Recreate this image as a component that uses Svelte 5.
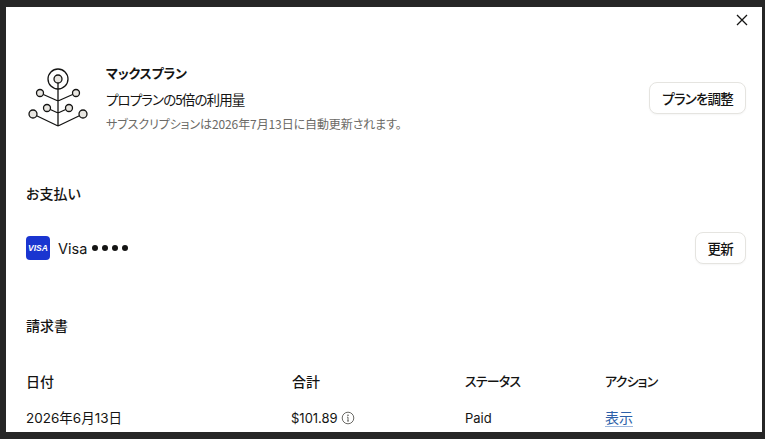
<script>
  const columns = [
    { label: '日付', kana: false },
    { label: '合計', kana: false },
    { label: 'ステータス', kana: true },
    { label: 'アクション', kana: true }
  ];
</script>

<div class="frame">
  <div class="panel">
    <div class="close-row">
      <button class="close" aria-label="閉じる">
        <svg width="12" height="12" viewBox="0 0 12 12" fill="none" stroke="#141413" stroke-width="1.3">
          <path d="M1 1l10 10M11 1L1 11" />
        </svg>
      </button>
    </div>

    <section class="plan">
      <svg class="plan-icon" width="64" height="62" viewBox="0 0 64 62" fill="none" stroke="#141413" stroke-width="1.3">
        <circle cx="32" cy="12" r="10" />
        <path d="M32 16v43M32 34L14 26M32 34l18-8M32 59L7 47M32 59l25-12M32 46l-11-5M32 46l11-5" />
        <g fill="#e8e6e1">
          <circle cx="32" cy="12" r="4" />
          <circle cx="14" cy="26" r="3.5" />
          <circle cx="50" cy="26" r="3.5" />
          <circle cx="21" cy="41" r="3.5" />
          <circle cx="43" cy="41" r="3.5" />
          <circle cx="7" cy="47" r="4" />
          <circle cx="57" cy="47" r="4" />
        </g>
      </svg>
      <div class="plan-text">
        <div class="plan-name">マックスプラン</div>
        <div class="plan-desc">プロプランの5倍の利用量</div>
        <div class="plan-note">サブスクリプションは2026年7月13日に自動更新されます。</div>
      </div>
      <button class="btn">プランを調整</button>
    </section>

    <h2 class="pay-title">お支払い</h2>
    <section class="pay">
      <div class="card">
        <span class="visa">VISA</span>
        <span class="card-name">Visa</span>
        <span class="dots"><i></i><i></i><i></i><i></i></span>
      </div>
      <button class="btn">更新</button>
    </section>

    <h2 class="inv-title">請求書</h2>
    <div class="table">
      {#each columns as col}
        <div class="th" class:kana={col.kana}>{col.label}</div>
      {/each}
      <div class="td date">2026年6月13日</div>
      <div class="td amount">
        $101.89
        <svg width="14" height="14" viewBox="0 0 14 14" fill="none" stroke="#6b6a66" stroke-width="1">
          <circle cx="7" cy="7" r="5.8" />
          <path d="M7 6.2v3.8M6 10h2M6 6.2h1" />
          <circle cx="7" cy="4.2" r="0.4" fill="#6b6a66" />
        </svg>
      </div>
      <div class="td">Paid</div>
      <div class="td"><a href="#top">表示</a></div>
    </div>
  </div>
</div>

<style>
  :global(body) {
    margin: 0;
    background: #262626;
  }

  .frame {
    height: 439px;
    box-sizing: border-box;
    padding: 7px 3px 7px 6px;
    overflow: hidden;
    font-family: "Noto Sans CJK JP", "Noto Sans", sans-serif;
    font-feature-settings: "palt";
    color: #141413;
  }

  .panel {
    height: 425px;
    background: #fff;
    padding: 0 16px 0 20px;
    overflow: hidden;
  }

  .close-row {
    display: flex;
    justify-content: flex-end;
    height: 56px;
  }

  .close {
    width: 20px;
    height: 20px;
    margin: 3px -6px 0 0;
    padding: 0;
    border: none;
    background: none;
    display: flex;
    align-items: center;
    justify-content: center;
  }

  .plan {
    display: flex;
    align-items: center;
    gap: 16px;
  }

  .plan-icon {
    flex-shrink: 0;
  }

  .plan-text {
    flex: 1;
    display: flex;
    flex-direction: column;
  }

  .plan-name {
    font-size: 13px;
    line-height: 20px;
    font-weight: 600;
    letter-spacing: -0.2px;
  }

  .plan-desc {
    margin-top: 6px;
    font-size: 13.5px;
    line-height: 21px;
    letter-spacing: -0.9px;
  }

  .plan-note {
    margin-top: 5px;
    font-size: 12px;
    line-height: 17px;
    letter-spacing: -0.1px;
    color: #6b6a66;
  }

  .btn {
    height: 32px;
    padding: 0 12px;
    font: 500 13.5px "Noto Sans CJK JP", sans-serif;
    font-feature-settings: "palt";
    letter-spacing: -0.8px;
    color: #141413;
    background: #fff;
    border: 1px solid #e5e4e0;
    border-radius: 8px;
    box-shadow: 0 1px 2px rgba(0, 0, 0, 0.04);
  }

  h2 {
    margin: 0;
    font-size: 14px;
    line-height: 20px;
    font-weight: 500;
  }

  .pay-title {
    margin-top: 51px;
  }

  .pay {
    display: flex;
    align-items: center;
    justify-content: space-between;
    margin-top: 29px;
  }

  .card {
    display: flex;
    align-items: center;
    gap: 8px;
    font-size: 14.5px;
  }

  .visa {
    width: 24px;
    height: 24px;
    border-radius: 4px;
    background: #1a35d0;
    color: #fff;
    font: italic 700 8.5px "Liberation Sans", sans-serif;
    display: flex;
    align-items: center;
    justify-content: center;
  }

  .card-name {
    font-family: "Inter", sans-serif;
  }

  .dots {
    display: flex;
    gap: 4px;
    margin-left: -3px;
  }

  .dots i {
    width: 6px;
    height: 6px;
    border-radius: 50%;
    background: #141413;
  }

  .inv-title {
    margin-top: 51px;
  }

  .table {
    display: grid;
    grid-template-columns: 266px 173px 140px 1fr;
    margin-top: 36px;
    row-gap: 17px;
    font-size: 13px;
    line-height: 20px;
  }

  .th {
    font-size: 14px;
    font-weight: 500;
  }

  .th.kana {
    font-size: 13px;
    letter-spacing: -0.8px;
  }

  .td {
    font-family: "Inter", "Noto Sans CJK JP", sans-serif;
  }

  .date {
    font-size: 13.5px;
  }

  .amount {
    display: flex;
    align-items: center;
    gap: 3px;
    margin-left: -1px;
  }

  a {
    color: #2c5fa8;
    font-size: 14px;
    text-decoration: none;
    border-bottom: 1px solid #9db8de;
  }
</style>
